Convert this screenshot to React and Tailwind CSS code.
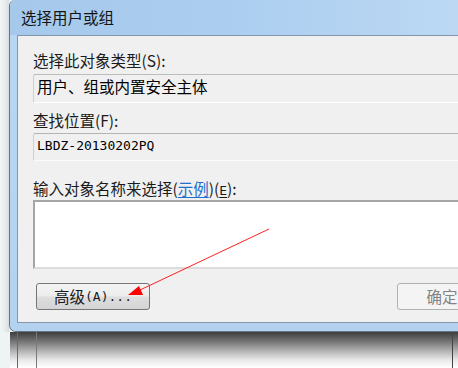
export default function App() {
  return (
    <div className="relative w-[458px] h-[368px] overflow-hidden bg-[#eef2f2] font-['Noto_Sans_CJK_SC',sans-serif] text-[15.5px] text-[#1b1b1b]">
      <div className="flex h-[332px]">
        <div className="w-[9px] shrink-0 bg-[linear-gradient(to_right,#f3f6f6,#e4e8ea_70%,#d5dadd)]" />
        <div className="flex-1 min-w-0 flex flex-col border-l border-b border-[#62758b] rounded-bl-[7px] rounded-tl-[6px] bg-[#b6d3f0] overflow-hidden">
          <div className="h-[35px] shrink-0 bg-[linear-gradient(to_right,#a5c8eb,#aacdf0_45%,#bcd8f3)] pl-[11px] leading-[35px] text-[#141414] whitespace-nowrap">
            选择用户或组
          </div>
          <div className="flex-1 flex pl-[7px] pb-[8px] bg-[linear-gradient(to_bottom,#b9d6f2,#b4d2f0)]">
            <div className="flex-1 min-w-0 flex flex-col border-l border-t border-b border-[#8496ab] bg-[#f0f0f0] pl-[15px]">
              <div className="mt-[14px] h-[20px] leading-[20px] whitespace-nowrap">选择此对象类型(S):</div>
              <div className="mt-[4px] h-[29px] w-[480px] shrink-0 flex items-center pb-[3px] pl-[3px] rounded-[2px] border border-[#cfcfcf] border-t-[#bcbcbc] border-b-white bg-[#f0f0f0] whitespace-nowrap text-black">
                用户、组或内置安全主体
              </div>
              <div className="mt-[7px] h-[20px] leading-[20px] whitespace-nowrap">查找位置(F):</div>
              <div className="mt-[3px] h-[28px] w-[480px] shrink-0 flex items-center pb-[2px] pl-[3px] rounded-[2px] border border-[#cfcfcf] border-t-[#b4b4b4] border-b-[#f8fbff] bg-[#f0f0f0] whitespace-nowrap text-black font-['DejaVu_Sans_Mono',monospace] text-[13px]">
                LBDZ-20130202PQ
              </div>
              <div className="mt-[17px] h-[20px] leading-[20px] whitespace-nowrap">
                输入对象名称来选择(<span className="text-[#1f6fcf] underline underline-offset-2">示例</span>)(<span className="underline underline-offset-2 font-['DejaVu_Sans_Mono',monospace] text-[13px]">E</span>):
              </div>
              <div className="mt-[2px] h-[69px] w-[480px] shrink-0 bg-white border-2 border-[#a5a5a5] border-b-[#dcdcdc] border-r-[#dcdcdc]" />
              <div className="mt-[14px] h-[27px] flex shrink-0">
                <div className="ml-[3px] w-[114px] shrink-0 h-[27px] rounded-[3px] border border-[#767676] bg-[linear-gradient(to_bottom,#f4f4f4,#ececec_48%,#dedede_52%,#d4d4d4)] flex items-center justify-center whitespace-nowrap text-[#1b1b1b]">
                  <span>高级</span>
                  <span className="font-['DejaVu_Sans_Mono',monospace] text-[13px]">(A)...</span>
                </div>
                <div className="ml-[247px] w-[90px] shrink-0 h-[27px] rounded-[3px] border border-[#adb2b5] bg-[#f4f4f4] flex items-center justify-center whitespace-nowrap text-[#838383]">
                  确定
                </div>
              </div>
            </div>
          </div>
        </div>
      </div>
      <div className="flex h-[36px]">
        <div className="w-[10px] shrink-0 bg-[#eef4f4]" />
        <div className="flex-1 flex bg-[linear-gradient(to_bottom,#3e3e3e_0px,#5a5a5a_5px,#7e7e7e_11px,#a6a6a6_17px,#cbcbcb_23px,#e8e8e8_28px,#f8f8f8_33px,#ffffff_36px)]">
          <div className="w-[7px] shrink-0" />
          <div className="w-[19px] shrink-0 border-l border-[#6a6a6a]" />
          <div className="w-[416px] shrink-0 border-l border-[#7a7a7a]" />
          <div className="flex-1 border-l border-[#444444]" />
        </div>
      </div>
      <svg className="absolute inset-0 pointer-events-none" width="458" height="368" viewBox="0 0 458 368">
        <line x1="269" y1="229" x2="140" y2="290" stroke="#ff2020" strokeWidth="1" />
        <polygon points="128,295 139,286 143,295" fill="#ff0000" />
      </svg>
    </div>
  );
}
